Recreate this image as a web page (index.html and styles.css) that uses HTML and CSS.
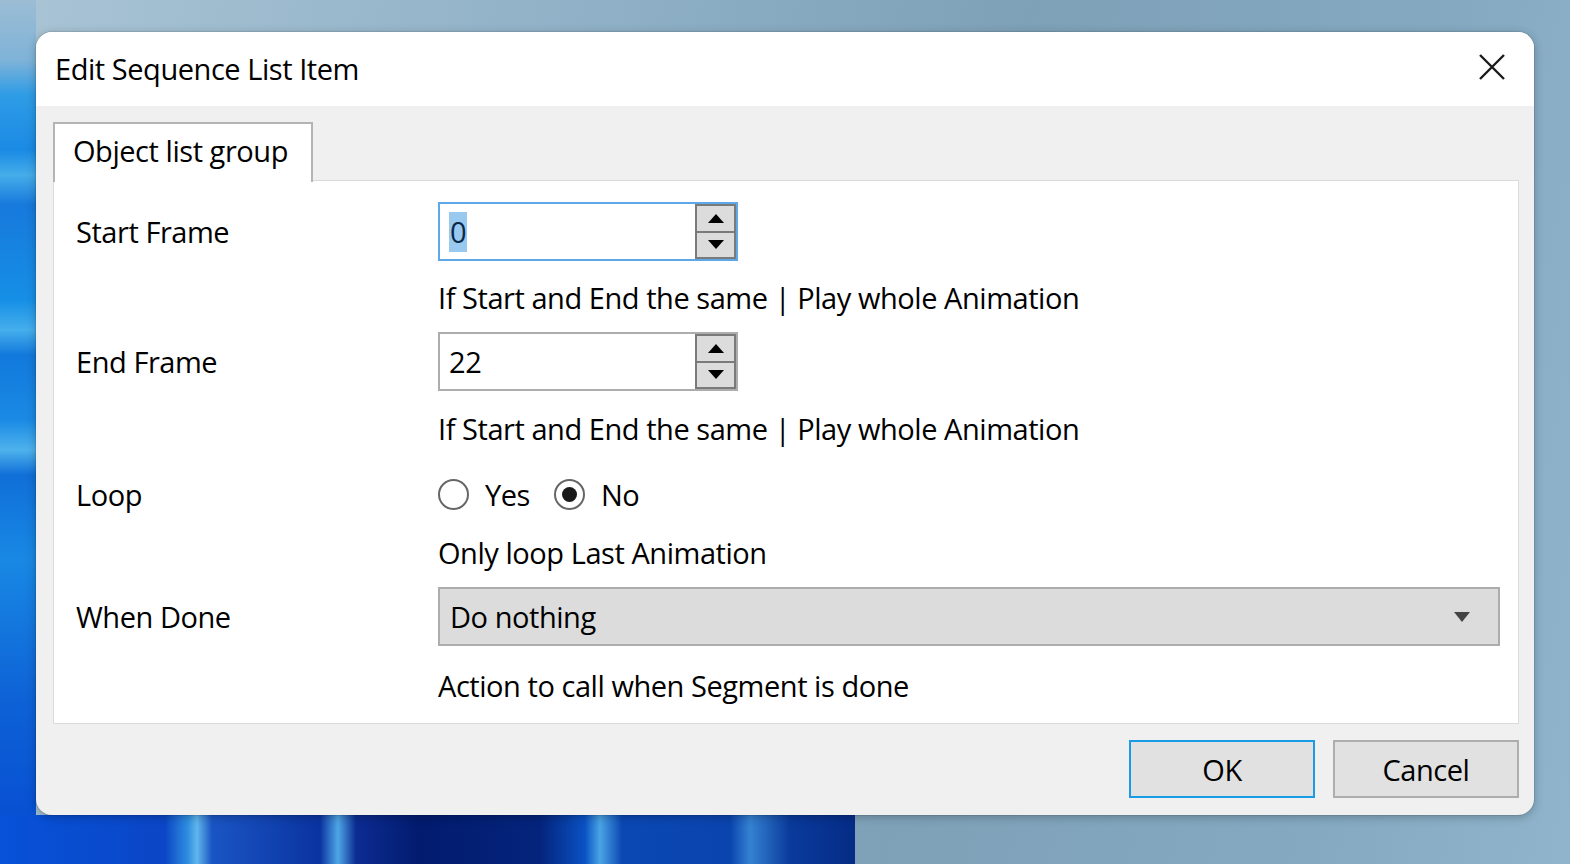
FILE: index.html
```html
<!DOCTYPE html>
<html lang="en">
<head>
<meta charset="utf-8">
<title>Edit Sequence List Item</title>
<link rel="stylesheet" href="styles.css">
</head>
<body>
<div class="desktop">
  <div class="window">
    <div class="titlebar">
      <span class="title">Edit Sequence List Item</span>
      <span class="close">
        <svg width="28" height="28" viewBox="0 0 28 28"><path d="M2 2 L26 26 M26 2 L2 26" stroke="#1b1b1b" stroke-width="2.4" fill="none"/></svg>
      </span>
    </div>
    <div class="client">
      <div class="tabstrip">
        <div class="tab">Object list group</div>
      </div>
      <div class="panel">
        <div class="row row-first">
          <div class="label">Start Frame</div>
          <div class="spin spin-focus">
            <div class="spin-text"><span class="sel">0</span></div>
            <div class="spin-btns">
              <div class="spin-btn"><span class="tri-up"></span></div>
              <div class="spin-btn"><span class="tri-down"></span></div>
            </div>
          </div>
        </div>
        <div class="row hint hint-1">If Start and End the same | Play whole Animation</div>
        <div class="row row-end">
          <div class="label">End Frame</div>
          <div class="spin">
            <div class="spin-text">22</div>
            <div class="spin-btns">
              <div class="spin-btn"><span class="tri-up"></span></div>
              <div class="spin-btn"><span class="tri-down"></span></div>
            </div>
          </div>
        </div>
        <div class="row hint hint-2">If Start and End the same | Play whole Animation</div>
        <div class="row row-loop">
          <div class="label">Loop</div>
          <div class="radios">
            <span class="radio"></span><span class="radio-label">Yes</span>
            <span class="radio radio-on"></span><span class="radio-label">No</span>
          </div>
        </div>
        <div class="row hint hint-3">Only loop Last Animation</div>
        <div class="row row-done">
          <div class="label">When Done</div>
          <div class="combo">
            <span>Do nothing</span>
            <span class="combo-arrow"></span>
          </div>
        </div>
        <div class="row hint hint-4">Action to call when Segment is done</div>
      </div>
      <div class="buttons">
        <div class="btn btn-default">OK</div>
        <div class="btn">Cancel</div>
      </div>
    </div>
  </div>
</div>
</body>
</html>
```
FILE: styles.css
```css
* { box-sizing: border-box; }
html, body { margin: 0; padding: 0; }
body {
  width: 1570px;
  height: 864px;
  overflow: hidden;
  font-family: "Open Sans", "Noto Sans", sans-serif;
  font-size: 29px;
  letter-spacing: -0.45px;
  color: #000;
}
.desktop {
  width: 1570px;
  height: 864px;
  padding: 32px 0 0 36px;
  background:
    linear-gradient(to right, #0652d9 0, #0b46c6 165px, #2f8fe0 188px, #5fb6ec 197px, #1a55c4 212px, #0a33a0 320px, #4ea6e6 338px, #0c2c92 356px, #021b6e 420px, #04247c 540px, #0a52c4 585px, #4aa4e4 600px, #0b48b4 622px, #0a44ae 730px, #3482d2 750px, #0a3a9c 790px, #052c86 855px, transparent 855px) 0 815px / 1570px 49px no-repeat,
    linear-gradient(to bottom, #9cbdd4 0, #7fb3d8 60px, #2f9ce6 95px, #1a8ae4 150px, #45ade9 175px, #1779dc 205px, #168fe6 300px, #45aeec 330px, #1279dc 355px, #1a8ae4 420px, #4eb2ec 450px, #106fd8 475px, #1888e4 560px, #0e62d6 700px, #0549d2 864px) 0 0 / 36px 864px no-repeat,
    linear-gradient(100deg, #a9c4d5 0%, #8fb0c6 35%, #7ea1b8 60%, #84a9c1 85%, #8fb4cb 100%);
}
.window {
  width: 1498px;
  height: 783px;
  border-radius: 16px;
  overflow: hidden;
  background: #f0f0f0;
  box-shadow: 0 2px 10px rgba(0, 0, 0, 0.25), 0 0 0 1px rgba(0, 0, 0, 0.08);
  display: flex;
  flex-direction: column;
}
.titlebar {
  height: 74px;
  background: #fff;
  display: flex;
  align-items: center;
  justify-content: space-between;
  padding: 0 28px 0 19px;
  flex: none;
}
.title { position: relative; top: -1px; }
.close { display: flex; width: 28px; height: 28px; position: relative; top: -2px; }
.client {
  flex: 1;
  padding: 16px 15px 0 17px;
  display: flex;
  flex-direction: column;
}
.tabstrip { display: flex; height: 58px; }
.tab {
  width: 260px;
  height: 60px;
  background: #fff;
  border: 2px solid #b4b4b4;
  border-bottom: none;
  padding: 7px 0 0 18px;
  position: relative;
  z-index: 1;
}
.panel {
  height: 544px;
  background: #fff;
  border: 1px solid #dadada;
  display: flex;
  flex-direction: column;
  padding-left: 22px;
}
.row { display: flex; align-items: center; }
.label { width: 362px; flex: none; }
.hint { height: 40px; padding-left: 362px; }
.row-first { margin-top: 21px; }
.hint-1 { margin-top: 16px; }
.row-end { margin-top: 15px; }
.hint-2 { margin-top: 17px; }
.row-loop { margin-top: 26px; height: 40px; }
.hint-3 { margin-top: 18px; }
.row-done { margin-top: 15px; }
.hint-4 { margin-top: 19px; }

.spin {
  width: 300px;
  height: 59px;
  border: 2px solid #adadad;
  display: flex;
  background: #fff;
}
.spin-focus { border-color: #5fa8e8; }
.spin-text {
  flex: 1;
  padding-left: 9px;
  display: flex;
  align-items: center;
}
.sel {
  background: #99c9ef;
  color: #0a2a4a;
  padding: 2px 1px;
  line-height: 36px;
}
.spin-btns {
  width: 41px;
  display: flex;
  flex-direction: column;
}
.spin-btn {
  flex: 1;
  background: #dcdcdc;
  border: 2px solid #7a7a7a;
  display: flex;
  align-items: center;
  justify-content: center;
}
.spin-btn + .spin-btn { border-top-width: 1px; }
.spin-btn:first-child { border-bottom-width: 1px; }
.tri-up {
  width: 0; height: 0;
  border-left: 8px solid transparent;
  border-right: 8px solid transparent;
  border-bottom: 9px solid #000;
}
.tri-down {
  width: 0; height: 0;
  border-left: 8px solid transparent;
  border-right: 8px solid transparent;
  border-top: 9px solid #000;
}

.radios { display: flex; align-items: center; }
.radio {
  width: 31px;
  height: 31px;
  border-radius: 50%;
  border: 2px solid #666;
  background: #fff;
  display: flex;
  align-items: center;
  justify-content: center;
}
.radio-on::after {
  content: "";
  width: 15px;
  height: 15px;
  border-radius: 50%;
  background: #1a1a1a;
}
.radio-label { margin-left: 16px; margin-right: 24px; }

.combo {
  width: 1062px;
  height: 59px;
  background: #dcdcdc;
  border: 2px solid #adadad;
  display: flex;
  align-items: center;
  justify-content: space-between;
  padding: 0 28px 0 10px;
}
.combo-arrow {
  width: 0; height: 0;
  border-left: 8px solid transparent;
  border-right: 8px solid transparent;
  border-top: 10px solid #444;
}

.buttons {
  display: flex;
  justify-content: flex-end;
  gap: 18px;
  margin-top: 16px;
}
.btn {
  width: 186px;
  height: 58px;
  background: #e1e1e1;
  border: 2px solid #adadad;
  display: flex;
  align-items: center;
  justify-content: center;
}
.btn-default { border-color: #1a9be6; }
```
